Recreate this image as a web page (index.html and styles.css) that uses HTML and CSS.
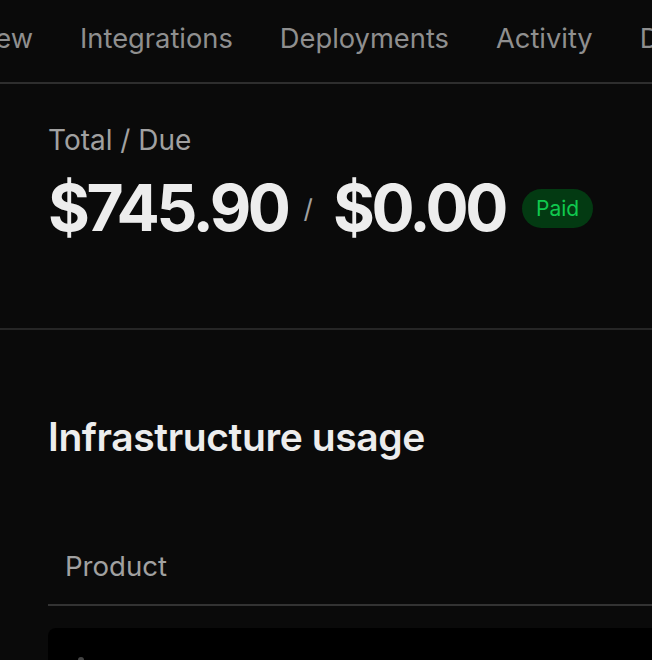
FILE: index.html
```html
<!DOCTYPE html>
<html>
<head>
<meta charset="utf-8">
<link rel="stylesheet" href="styles.css">
</head>
<body>
<div class="page">
  <nav class="tabs">
    <div class="tabs-track">
      <span class="tab">Overview</span>
      <span class="tab">Integrations</span>
      <span class="tab">Deployments</span>
      <span class="tab">Activity</span>
      <span class="tab">Domains</span>
    </div>
  </nav>
  <section class="summary">
    <div class="label">Total / Due</div>
    <div class="amounts">
      <span class="amount">$745.90</span>
      <span class="sep">/</span>
      <span class="amount">$0.00</span>
      <span class="badge">Paid</span>
    </div>
  </section>
  <section class="usage">
    <h2 class="title">Infrastructure usage</h2>
    <div class="table">
      <div class="thead"><span class="th">Product</span></div>
      <div class="tbody"><span class="dot"></span></div>
    </div>
  </section>
</div>
</body>
</html>
```
FILE: styles.css
```css
html, body {
  margin: 0;
  padding: 0;
  background: #0a0a0a;
  overflow: hidden;
}
.page {
  width: 652px;
  height: 660px;
  overflow: hidden;
  font-family: Inter, "Noto Sans", sans-serif;
  color: #ededed;
}
.tabs {
  height: 82px;
  border-bottom: 2px solid #2e2e2e;
  overflow: hidden;
}
.tabs-track {
  display: flex;
  align-items: center;
  gap: 47px;
  height: 76px;
  margin-left: -89px;
  white-space: nowrap;
}
.tab {
  font-size: 27.3px;
  color: #8f8f8f;
}
.summary {
  padding: 39px 0 0 48px;
  height: 205px;
  border-bottom: 2px solid #262626;
}
.label {
  font-size: 28px;
  color: #a1a1a1;
  line-height: 34px;
}
.amounts {
  display: flex;
  align-items: center;
  margin-top: 11px;
}
.amount {
  font-size: 64px;
  font-weight: 700;
  letter-spacing: -3.4px;
  line-height: 80px;
  color: #ededed;
}
.sep {
  font-size: 26px;
  color: #a1a1a1;
  margin: 0 20px 0 16px;
}
.badge {
  margin-left: 17px;
  height: 39px;
  padding: 0 14px;
  border-radius: 20px;
  background: #033a12;
  color: #10c94e;
  font-size: 21px;
  display: flex;
  align-items: center;
}
.usage {
  padding: 83px 0 0 48px;
}
.title {
  margin: 0;
  font-size: 39px;
  font-weight: 600;
  letter-spacing: -0.4px;
  line-height: 48px;
  color: #ededed;
}
.table {
  margin-top: 82px;
}
.thead {
  height: 61px;
  border-bottom: 2px solid #333;
  padding-left: 17px;
  display: flex;
  align-items: flex-start;
}
.th {
  font-size: 27.6px;
  color: #a1a1a1;
  line-height: 34px;
  margin-top: 6px;
}
.tbody {
  margin-top: 22px;
  height: 80px;
  background: #000;
  border-radius: 8px 0 0 0;
  position: relative;
}
.dot {
  position: absolute;
  left: 30px;
  top: 29px;
  width: 6px;
  height: 6px;
  border-radius: 50%;
  background: #444;
}
```
